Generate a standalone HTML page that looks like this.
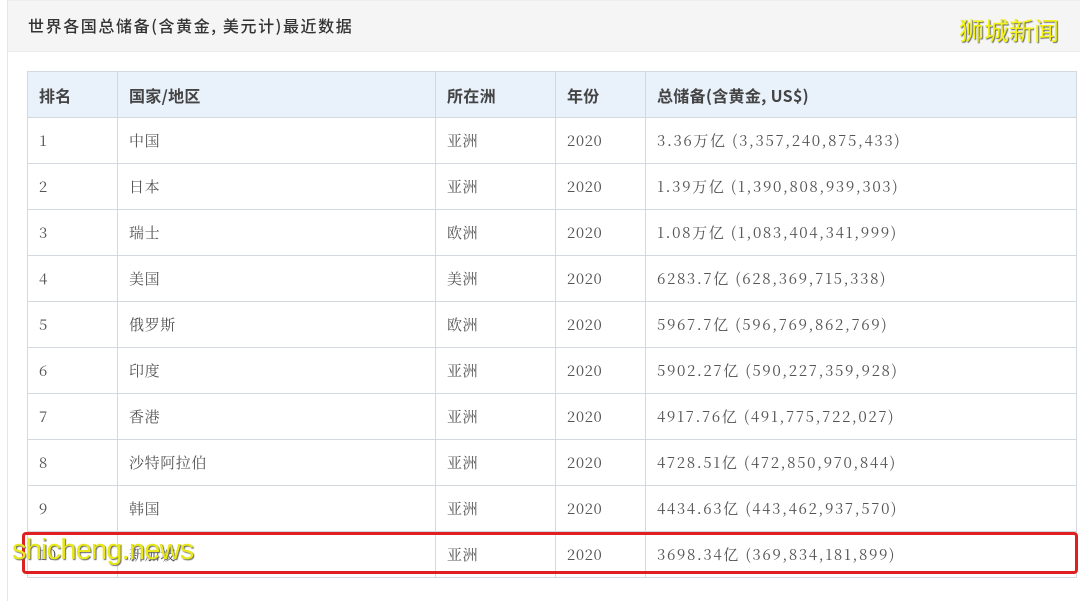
<!DOCTYPE html>
<html><head><meta charset="utf-8"><style>
body{margin:0;width:1080px;height:575px;overflow:hidden;background:#fff;position:relative;font-family:"Liberation Sans","Noto Sans CJK SC",sans-serif;}
.frame{position:absolute;left:7px;top:0;width:1080px;height:600px;border-left:1px solid #e6e6e6;border-top:1px solid #eee;}
.hd{position:absolute;left:8px;top:1px;width:1072px;height:50px;background:#f5f5f5;border-bottom:1px solid #ececec;}
.hd span{position:absolute;left:20px;top:12px;font-size:16px;color:#333;font-family:"Noto Sans CJK SC",sans-serif;letter-spacing:1.6px;font-weight:500;}
.logo{position:absolute;left:959px;top:14px;font-size:25px;line-height:32px;color:#f2f21a;text-shadow:1px 1px 1px #666;font-family:"Noto Sans CJK SC",sans-serif;}
table{position:absolute;left:27px;top:71px;border-collapse:collapse;width:1050px;table-layout:fixed;}
td,th{border:1px solid #d4d9e0;height:45px;padding:0 0 0 11px;text-align:left;font-size:15px;line-height:20px;color:#555;font-family:"Noto Serif CJK SC",serif;vertical-align:middle;letter-spacing:0.6px;}
td:last-child{letter-spacing:1.6px;}
th{background:#e9f1fb;color:#444;font-family:"Noto Sans CJK SC",sans-serif;font-size:16px;font-weight:bold;letter-spacing:0.3px;}
.red{position:absolute;left:22px;top:532px;width:1050px;height:36px;border:3px solid #e02020;border-radius:4px;}
.wm{position:absolute;left:12px;top:534px;font-size:29px;color:#e8e81a;text-shadow:1px 1px 1px #666;letter-spacing:-0.8px;}
</style></head><body>
<div class="frame"></div>
<div class="hd"><span>世界各国总储备(含黄金, 美元计)最近数据</span></div>
<div class="logo">狮城新闻</div>
<table>
<colgroup><col style="width:90px"><col style="width:318px"><col style="width:120px"><col style="width:90px"><col></colgroup>
<tr><th>排名</th><th>国家/地区</th><th>所在洲</th><th>年份</th><th>总储备(含黄金, US$)</th></tr>
<tr><td>1</td><td>中国</td><td>亚洲</td><td>2020</td><td>3.36万亿 (3,357,240,875,433)</td></tr>
<tr><td>2</td><td>日本</td><td>亚洲</td><td>2020</td><td>1.39万亿 (1,390,808,939,303)</td></tr>
<tr><td>3</td><td>瑞士</td><td>欧洲</td><td>2020</td><td>1.08万亿 (1,083,404,341,999)</td></tr>
<tr><td>4</td><td>美国</td><td>美洲</td><td>2020</td><td>6283.7亿 (628,369,715,338)</td></tr>
<tr><td>5</td><td>俄罗斯</td><td>欧洲</td><td>2020</td><td>5967.7亿 (596,769,862,769)</td></tr>
<tr><td>6</td><td>印度</td><td>亚洲</td><td>2020</td><td>5902.27亿 (590,227,359,928)</td></tr>
<tr><td>7</td><td>香港</td><td>亚洲</td><td>2020</td><td>4917.76亿 (491,775,722,027)</td></tr>
<tr><td>8</td><td>沙特阿拉伯</td><td>亚洲</td><td>2020</td><td>4728.51亿 (472,850,970,844)</td></tr>
<tr><td>9</td><td>韩国</td><td>亚洲</td><td>2020</td><td>4434.63亿 (443,462,937,570)</td></tr>
<tr><td>10</td><td>新加坡</td><td>亚洲</td><td>2020</td><td>3698.34亿 (369,834,181,899)</td></tr>
</table>
<div class="red"></div>
<div class="wm">shicheng.news</div>
</body></html>
